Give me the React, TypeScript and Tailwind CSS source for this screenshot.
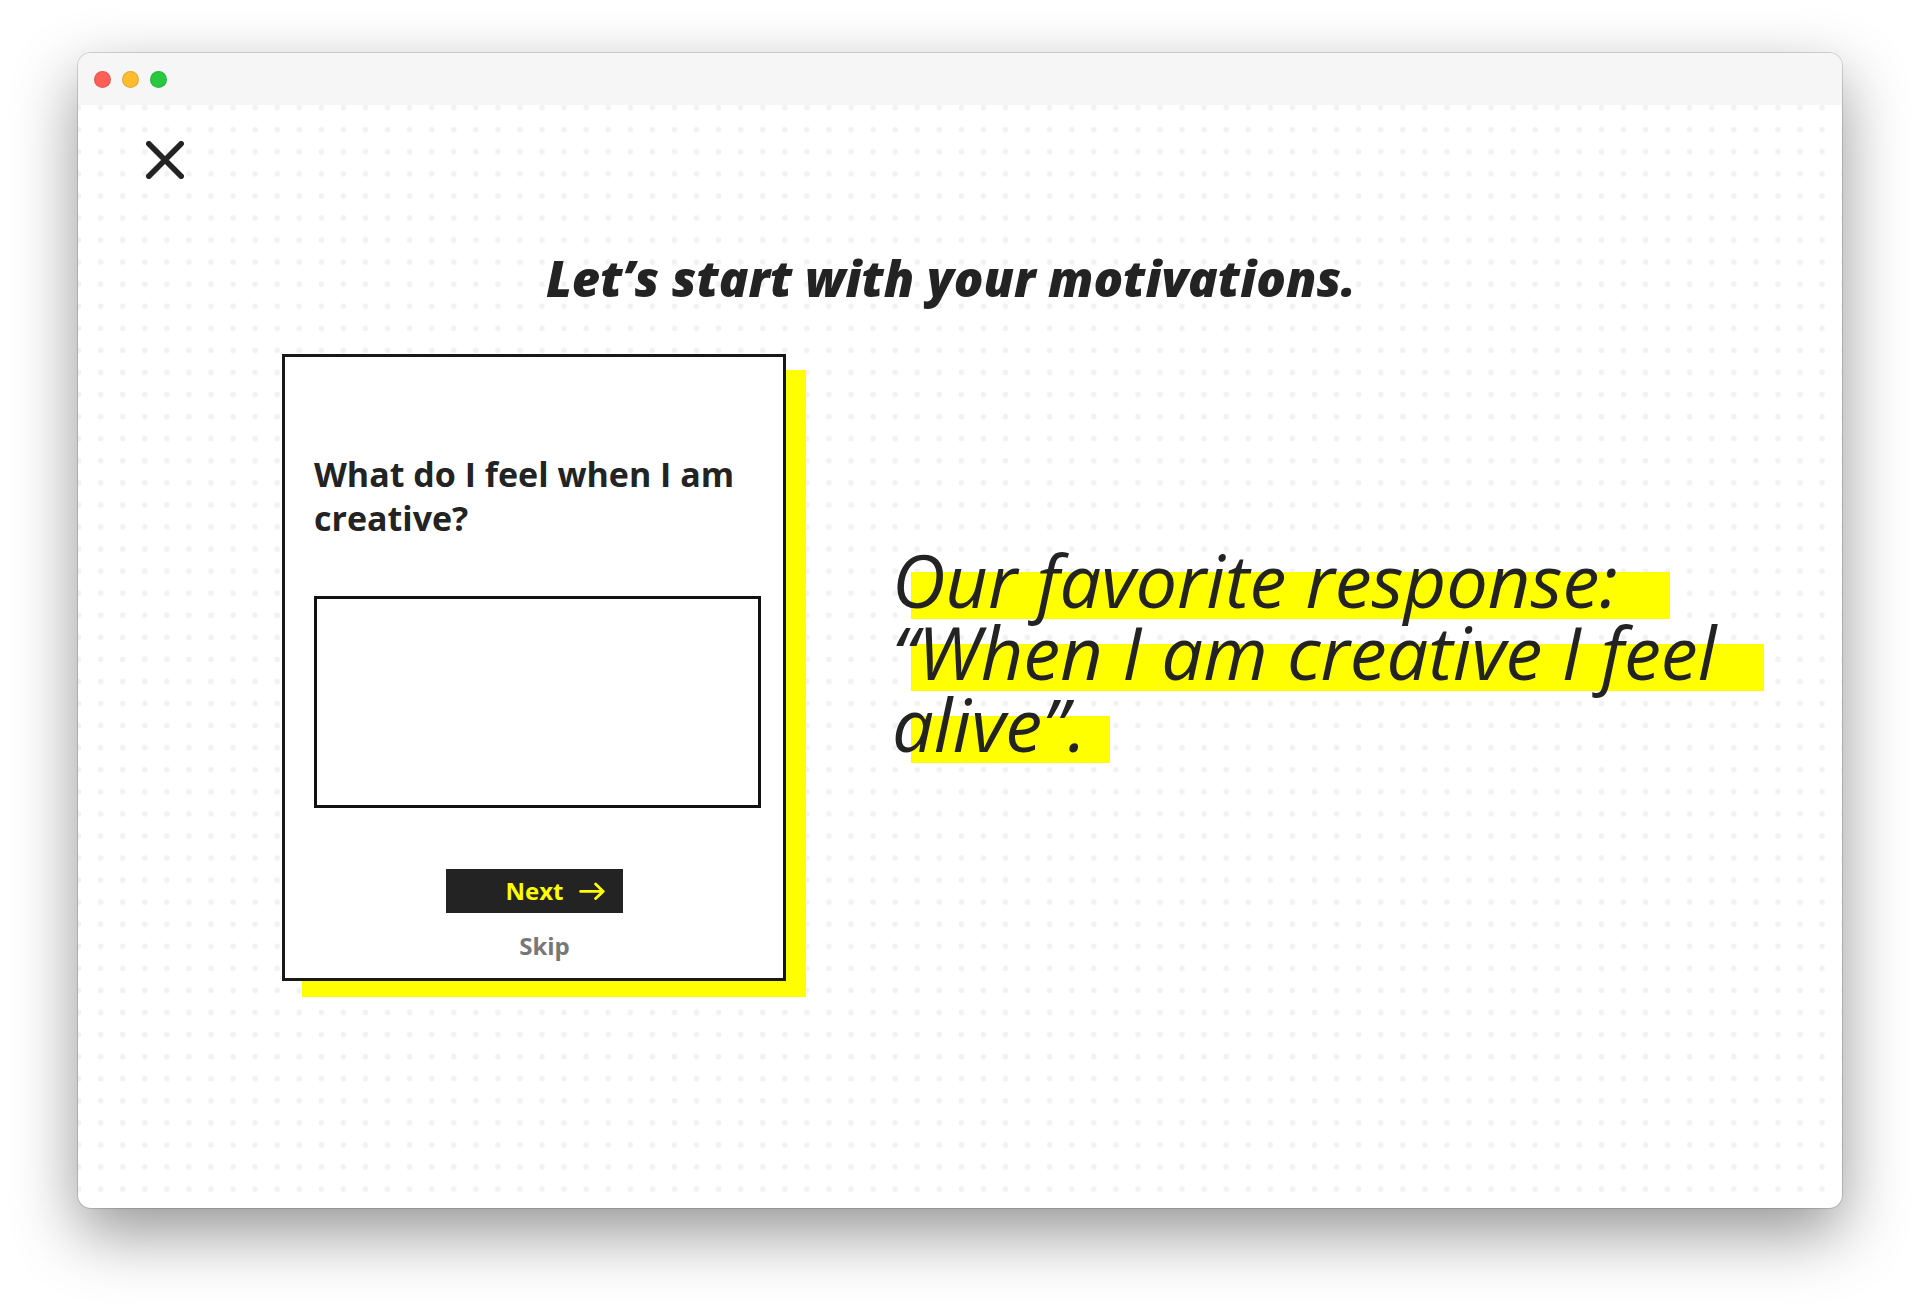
const lights = ["bg-[#ff5f57]", "bg-[#febc2e]", "bg-[#28c840]"];

const quoteLines = [
  { text: "Our favorite response:", pad: "pr-[52px]" },
  { text: "“When I am creative I feel", pad: "pr-12" },
  { text: "alive”.", pad: "pr-6" },
];

function TitleBar() {
  return (
    <header className="flex h-[52px] shrink-0 items-center gap-[11px] bg-[#f6f6f6] pl-4">
      {lights.map((color) => (
        <span key={color} className={`size-[17px] rounded-full border border-black/10 ${color}`} />
      ))}
    </header>
  );
}

function DotGrid() {
  return (
    <svg className="absolute inset-0 -z-10 size-full" aria-hidden="true">
      <defs>
        <pattern id="dots" width="22.07" height="22.07" patternUnits="userSpaceOnUse" patternTransform="translate(11.6 -8.4)">
          <circle cx="11.03" cy="11.03" r="2.8" fill="#f2f2f2" />
        </pattern>
      </defs>
      <rect width="100%" height="100%" fill="url(#dots)" />
    </svg>
  );
}

function CloseIcon() {
  return (
    <svg className="size-[38px]" viewBox="0 0 38 38" fill="none" stroke="#232323" strokeWidth="5.6" strokeLinecap="round" aria-hidden="true">
      <path d="M2.8 2.8 35.2 35.2M35.2 2.8 2.8 35.2" />
    </svg>
  );
}

function ArrowIcon() {
  return (
    <svg className="h-[18px] w-[26px]" viewBox="0 0 26 18" fill="none" stroke="#ffff00" strokeWidth="2.8" strokeLinecap="round" strokeLinejoin="round" aria-hidden="true">
      <path d="M1.6 9.4H24.2M16.6 2 24.2 9.4l-7.6 7.2" />
    </svg>
  );
}

function QuestionCard() {
  return (
    <form
      className="flex w-[504px] shrink-0 flex-col border-[3px] border-[#181818] bg-white pt-[95px] pr-[22px] pb-4 pl-[29px] shadow-[20px_16px_0_0_#ffff00]"
      onSubmit={(e) => e.preventDefault()}
    >
      <label htmlFor="answer" className="text-[34px] leading-[44px] font-bold">
        What do I feel when I am creative?
      </label>
      <textarea
        id="answer"
        className="mt-14 h-[212px] w-full resize-none border-[3px] border-[#111111] bg-white p-4 text-2xl outline-none"
      />
      <div className="mt-[61px] flex flex-col items-center pr-[6px]">
        <button type="submit" className="flex h-11 items-center gap-4 bg-[#232323] pr-[18px] pl-[60px] text-2xl font-bold text-[#ffff00]">
          Next
          <ArrowIcon />
        </button>
        <button type="button" className="mt-[17px] ml-5 text-2xl leading-8 font-bold text-[#777777]">
          Skip
        </button>
      </div>
    </form>
  );
}

function Quote() {
  return (
    <p className="flex-1 pb-8 text-[74px] leading-[72px] italic">
      {quoteLines.map(({ text, pad }) => (
        <span
          key={text}
          className={`relative z-0 block w-fit whitespace-nowrap before:absolute before:top-7 before:right-0 before:left-[19px] before:-z-10 before:h-[47px] before:bg-[#ffff00] ${pad}`}
        >
          {text}
        </span>
      ))}
    </p>
  );
}

export default function App() {
  return (
    <div className="flex min-h-screen flex-col bg-white px-[78px] pt-[53px] pb-[102px] font-['Open_Sans',sans-serif] text-[#232323]">
      <div className="flex flex-1 flex-col overflow-hidden rounded-[13px] bg-white shadow-[0_0_0_1px_rgba(0,0,0,0.14),0_25px_65px_0_rgba(0,0,0,0.42)]">
        <TitleBar />
        <main className="relative isolate flex-1">
          <DotGrid />
          <button type="button" aria-label="Close" className="mt-9 ml-[68px] block">
            <CloseIcon />
          </button>
          <h1 className="mt-[69px] pr-[18px] text-center text-[49px] leading-[60px] font-extrabold italic">
            Let’s start with your motivations.
          </h1>
          <div className="mt-[46px] flex items-center gap-[106px] pl-[204px]">
            <QuestionCard />
            <Quote />
          </div>
        </main>
      </div>
    </div>
  );
}
